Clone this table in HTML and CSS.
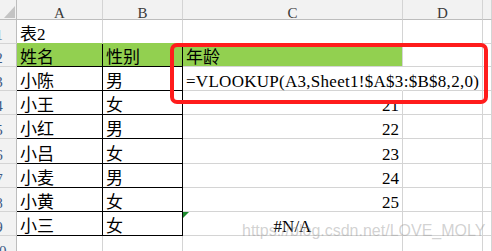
FILE: index.html
```html
<!DOCTYPE html>
<html lang="zh-CN">
<head>
    <meta charset="UTF-8">
    <meta name="viewport" content="width=device-width, initial-scale=1.0">
    <title>表2 - VLOOKUP</title>
    <link rel="stylesheet" href="styles.css">
</head>
<body>

<div class="sheet">
    <div class="grid">
        <!-- column headers -->
        <div class="corner"></div>
        <div class="colhead">A</div>
        <div class="colhead">B</div>
        <div class="colhead">C</div>
        <div class="colhead">D</div>
        <div class="colhead"></div>

        <!-- row 1: title -->
        <div class="rowhead"><span>1</span></div>
        <div class="cell over-fill">表2</div>
        <div class="cell over-fill"></div>
        <div class="cell over-fill"></div>
        <div class="cell"></div>
        <div class="cell"></div>

        <!-- row 2: table header -->
        <div class="rowhead"><span>2</span></div>
        <div class="cell boxed green">姓名</div>
        <div class="cell boxed green">性别</div>
        <div class="cell green">年龄</div>
        <div class="cell"></div>
        <div class="cell"></div>

        <!-- row 3: formula shown as text -->
        <div class="rowhead"><span>3</span></div>
        <div class="cell boxed">小陈</div>
        <div class="cell boxed">男</div>
        <div class="cell spill"><span class="formula">=VLOOKUP(A3,Sheet1!$A$3:$B$8,2,0)</span></div>
        <div class="cell"></div>
        <div class="cell"></div>

        <div class="rowhead"><span>4</span></div>
        <div class="cell boxed">小王</div>
        <div class="cell boxed">女</div>
        <div class="cell num">21</div>
        <div class="cell"></div>
        <div class="cell"></div>

        <div class="rowhead"><span>5</span></div>
        <div class="cell boxed">小红</div>
        <div class="cell boxed">男</div>
        <div class="cell num">22</div>
        <div class="cell"></div>
        <div class="cell"></div>

        <div class="rowhead"><span>6</span></div>
        <div class="cell boxed">小吕</div>
        <div class="cell boxed">女</div>
        <div class="cell num">23</div>
        <div class="cell"></div>
        <div class="cell"></div>

        <div class="rowhead"><span>7</span></div>
        <div class="cell boxed">小麦</div>
        <div class="cell boxed">男</div>
        <div class="cell num">24</div>
        <div class="cell"></div>
        <div class="cell"></div>

        <div class="rowhead"><span>8</span></div>
        <div class="cell boxed">小黄</div>
        <div class="cell boxed">女</div>
        <div class="cell num">25</div>
        <div class="cell"></div>
        <div class="cell"></div>

        <!-- row 9: lookup fails -->
        <div class="rowhead"><span>9</span></div>
        <div class="cell boxed">小三</div>
        <div class="cell boxed">女</div>
        <div class="cell err">#N/A</div>
        <div class="cell"></div>
        <div class="cell"></div>

        <div class="rowhead"><span>10</span></div>
        <div class="cell"></div>
        <div class="cell"></div>
        <div class="cell"></div>
        <div class="cell"></div>
        <div class="cell"></div>
    </div>

    <!-- red frame around the header cell and formula -->
    <div class="callout"></div>

    <div class="watermark">https://blog.csdn.net/LOVE_MOLY</div>
</div>

</body>
</html>
```

FILE: styles.css
```css
body {
    margin: 0;
    padding: 0;
    background-color: #fff;
    overflow: hidden;
}

.sheet {
    position: relative;
    width: 492px;
    height: 251px;
    overflow: hidden;
    font-family: 'Liberation Serif', 'Noto Sans CJK SC', serif;
    color: #000;
}

.grid {
    display: grid;
    grid-template-columns: 17px 86px 80px 220px 80px 1fr;
    grid-template-rows: 20px 24px 23px 24px 24px 24px 25px 24px 24px 24px 24px;
}

/* Header strip */
.corner,
.colhead,
.rowhead {
    box-sizing: border-box;
    background-color: #f2f2f2;
    border-right: 1px solid #d4d4d4;
    border-bottom: 1px solid #d4d4d4;
}

.corner {
    position: relative;
    border-right-color: #bdbdbd;
    border-bottom-color: #bdbdbd;
}

.corner::after {
    content: '';
    position: absolute;
    right: 1px;
    bottom: 1px;
    border-left: 11px solid transparent;
    border-bottom: 12px solid #c4c4c4;
}

.colhead {
    display: flex;
    justify-content: center;
    align-items: flex-end;
    border-bottom-color: #bdbdbd;
    font-size: 15px;
    line-height: 12px;
    color: #3a3a3a;
}

.rowhead {
    display: flex;
    align-items: flex-end;
    overflow: hidden;
    border-right-color: #bdbdbd;
    font-size: 15px;
    line-height: 16px;
    color: #3b5a85;
}

.rowhead span {
    flex: none;
    width: 34px;
    margin-left: -18px;
    text-align: center;
}

/* Cells */
.cell {
    box-sizing: border-box;
    display: flex;
    align-items: flex-end;
    padding: 0 3px;
    border-right: 1px solid #d4d4d4;
    border-bottom: 1px solid #d4d4d4;
    font-size: 17px;
    line-height: 16px;
    white-space: nowrap;
}

.cell.over-fill {
    border-bottom-color: #92d050;
}

.cell.green {
    background-color: #92d050;
}

.cell.boxed {
    border-right-color: #000;
    border-bottom-color: #000;
}

.cell.spill {
    overflow: visible;
    border-right-color: transparent;
}

.formula {
    letter-spacing: 0.28px;
}

.cell.num {
    justify-content: flex-end;
}

.cell.err {
    position: relative;
    justify-content: center;
}

/* error indicator in the corner of the cell */
.cell.err::before {
    content: '';
    position: absolute;
    top: 0;
    left: 0;
    border-top: 6px solid #1d8a2e;
    border-right: 6px solid transparent;
}

.callout {
    position: absolute;
    left: 170px;
    top: 43px;
    width: 318px;
    height: 61px;
    box-sizing: border-box;
    border: 4px solid #ff1c1c;
    border-radius: 7px;
}

.watermark {
    position: absolute;
    left: 242px;
    top: 222px;
    font-family: 'Liberation Sans', Arial, sans-serif;
    font-size: 16px;
    color: rgba(140, 140, 140, 0.4);
}
```
